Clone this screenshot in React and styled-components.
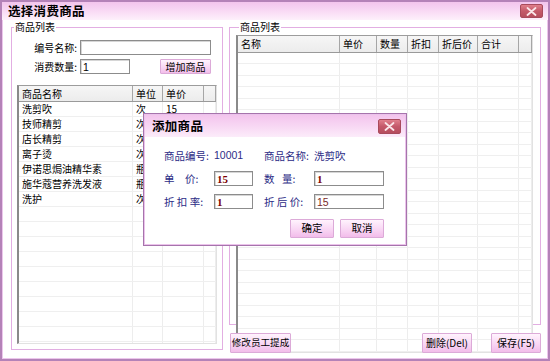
import React from "react";
import styled, { createGlobalStyle } from "styled-components";

const GlobalStyle = createGlobalStyle`
  html, body { margin: 0; padding: 0; background: #fff; }
  body {
    font-family: "Noto Sans CJK SC", "Noto Sans", sans-serif;
    font-size: 10px;
    color: #000;
  }
  * { box-sizing: border-box; }
`;

const Window = styled.div`
  position: relative;
  width: 550px;
  height: 361px;
  border: 2px solid #b482b8;
  box-shadow: inset 0 0 0 1px #ecc6ec;
  background: #fff;
  display: flex;
  flex-direction: column;
`;

const TitleBar = styled.div`
  height: 18px;
  flex: none;
  display: flex;
  align-items: center;
  justify-content: space-between;
  padding: 0 5px 0 6px;
  background: linear-gradient(#f3c4ed, #f9dcf5 55%, #fdf0fb);
`;

const Title = styled.div`
  font-size: 12.5px;
  font-weight: bold;
  line-height: 18px;
  letter-spacing: 0.3px;
`;

const CloseBtn = styled.div`
  width: ${(p) => p.w}px;
  height: ${(p) => p.h}px;
  border-radius: 2px;
  border: 1px solid #a84a5c;
  background: linear-gradient(#e07f8c, #c4596a 50%, #b64d5e);
  display: flex;
  align-items: center;
  justify-content: center;
`;

const CloseIcon = () => (
  <svg width="11" height="9" viewBox="0 0 11 9">
    <path d="M1.5 1 L9.5 8 M9.5 1 L1.5 8" stroke="#fbe6ea" strokeWidth="1.8" strokeLinecap="round" />
  </svg>
);

const Body = styled.div`
  flex: 1;
  display: flex;
  gap: 6px;
  padding: 1px 7px 0 9px;
  min-height: 0;
`;

const Group = styled.fieldset`
  margin: 0;
  padding: ${(p) => p.pad};
  width: ${(p) => p.w}px;
  height: ${(p) => p.h}px;
  flex: none;
  border: 1px solid #e2aee2;
  display: flex;
  flex-direction: column;
  min-width: 0;
`;

const Legend = styled.legend`
  margin-left: ${(p) => p.ml}px;
  padding: 0 1px;
  font-size: 10px;
  line-height: 12px;
`;

const Form = styled.div`
  display: grid;
  grid-template-columns: 63px 80px 51px;
  grid-auto-rows: 15px;
  row-gap: 4px;
  align-items: center;
  margin-top: 7px;
`;

const FormLabel = styled.div`
  text-align: right;
  padding-right: 3px;
  line-height: 15px;
`;

const TextInput = styled.input`
  grid-column: span ${(p) => p.span || 1};
  width: ${(p) => p.w}px;
  height: ${(p) => p.h || 15}px;
  margin: 0;
  padding: 0 2px;
  border: 1px solid #8c8c8c;
  box-shadow: inset 1px 1px 0 #d6d6d6;
  font-family: ${(p) => (p.serif ? '"Liberation Serif", serif' : '"Liberation Sans", "Noto Sans CJK SC", sans-serif')};
  font-size: ${(p) => (p.bold ? 11 : 10.5)}px;
  font-weight: ${(p) => (p.bold ? "bold" : "normal")};
  color: ${(p) => p.color || "#000"};
  background: #fff;
  outline: none;
`;

const PinkButton = styled.button`
  width: ${(p) => p.w}px;
  height: ${(p) => p.h}px;
  margin: 0;
  padding: 0;
  flex: none;
  border: 1px solid #dcaad8;
  border-radius: 1px;
  background: linear-gradient(#fff3fd, #f8d4f3 60%, #f2bdea);
  font-family: "Noto Sans CJK SC", "Noto Sans", sans-serif;
  font-size: ${(p) => p.fs || 10}px;
  line-height: 1;
  color: #000;
  white-space: nowrap;
`;

const Table = styled.div`
  margin-top: ${(p) => p.mt}px;
  flex: 1;
  min-height: 0;
  display: flex;
  flex-direction: column;
  overflow: hidden;
  border-left: 2px solid #8a8a8a;
  border-top: 1px solid #9c9c9c;
  border-right: 1px solid #e2e2e2;
  border-bottom: 1px solid #e2e2e2;
  background: #fff;
`;

const HeaderRow = styled.div`
  flex: none;
  display: flex;
  height: ${(p) => p.h}px;
  background: linear-gradient(#f6f6f6, #ececec);
  border-bottom: 1px solid #9a9a9a;
`;

const HeadCell = styled.div`
  flex: ${(p) => (p.w ? "none" : 1)};
  width: ${(p) => (p.w ? `${p.w}px` : "auto")};
  border-right: 1px solid #a6a6a6;
  padding-left: 3px;
  line-height: ${(p) => p.lh}px;
  white-space: nowrap;
  overflow: hidden;
`;

const Row = styled.div`
  flex: none;
  display: flex;
  height: ${(p) => p.h}px;
  border-bottom: 1px solid #efefef;
`;

const Cell = styled.div`
  flex: ${(p) => (p.w ? "none" : 1)};
  width: ${(p) => (p.w ? `${p.w}px` : "auto")};
  border-right: 1px solid #ededed;
  padding-left: 3px;
  line-height: ${(p) => p.h - 1}px;
  white-space: nowrap;
  overflow: hidden;
`;

const RightColumn = styled.div`
  display: flex;
  flex-direction: column;
  gap: 8px;
  width: 312px;
`;

const ButtonBar = styled.div`
  display: flex;
  align-items: center;
  height: 20px;
  padding-left: 1px;
`;

const Spacer = styled.div`
  flex: 1;
`;

const Gap = styled.div`
  width: ${(p) => p.w}px;
  flex: none;
`;

/* dialog */
const Dialog = styled.div`
  position: absolute;
  left: 141px;
  top: 111px;
  width: 264px;
  height: 133px;
  border: 1px solid #a674ac;
  box-shadow: inset 0 0 0 1px #ebc3eb;
  background: #fff;
  display: flex;
  flex-direction: column;
`;

const DialogTitle = styled.div`
  height: 22px;
  flex: none;
  margin: 1px 1px 0 1px;
  display: flex;
  align-items: center;
  justify-content: space-between;
  padding: 0 4px 0 7px;
  background: linear-gradient(#f3c4ed, #f8d9f4 55%, #fcecfa);
`;

const DialogBody = styled.div`
  padding: 11px 0 0 20px;
  display: flex;
  flex-direction: column;
`;

const DialogGrid = styled.div`
  display: grid;
  grid-template-columns: 50px 50px 50px 70px;
  grid-auto-rows: 15px;
  row-gap: 8px;
  align-items: center;
`;

const DLabel = styled.div`
  color: #2c2c86;
  font-size: 10.5px;
  line-height: 15px;
  white-space: pre;
`;

const DValue = styled.div`
  color: #2c2c86;
  font-size: 10.5px;
  line-height: 15px;
  font-family: ${(p) => (p.latin ? '"Liberation Sans", sans-serif' : "inherit")};
`;

const DialogActions = styled.div`
  display: flex;
  justify-content: flex-end;
  gap: 6px;
  margin-top: 10px;
  padding-right: 22px;
`;

const leftCols = [114, 30, 41, 0];
const leftRows = [
  ["洗剪吹", "次", "15"],
  ["技师精剪", "次", ""],
  ["店长精剪", "次", ""],
  ["离子烫", "次", ""],
  ["伊诺思焗油精华素", "瓶", ""],
  ["施华蔻营养洗发液", "瓶", ""],
  ["洗护", "次", ""],
];
const rightCols = [102, 37, 31, 31, 39, 41, 0];
const rightHead = ["名称", "单价", "数量", "折扣", "折后价", "合计", ""];

export default function App() {
  const leftAll = [...leftRows, ...Array.from({ length: 10 }, () => ["", "", ""])];
  const rightAll = Array.from({ length: 26 }, (_, i) => i);
  return (
    <>
      <GlobalStyle />
      <Window>
        <TitleBar>
          <Title>选择消费商品</Title>
          <CloseBtn w={23} h={14}>
            <CloseIcon />
          </CloseBtn>
        </TitleBar>
        <Body>
          <Group w={212} h={329} pad="0 5px 5px 5px">
            <Legend ml={-3}>商品列表</Legend>
            <Form>
              <FormLabel>编号名称:</FormLabel>
              <TextInput span={2} w={131} readOnly value="" />
              <FormLabel>消费数量:</FormLabel>
              <TextInput w={50} readOnly value="1" />
              <PinkButton w={51} h={15}>增加商品</PinkButton>
            </Form>
            <Table mt={11}>
              <HeaderRow h={16}>
                {["商品名称", "单位", "单价", ""].map((t, i) => (
                  <HeadCell key={i} w={leftCols[i]} lh={15}>{t}</HeadCell>
                ))}
              </HeaderRow>
              {leftAll.map((r, i) => (
                <Row key={i} h={15}>
                  {[...r, ""].map((t, j) => (
                    <Cell key={j} w={leftCols[j]} h={15}>{t}</Cell>
                  ))}
                </Row>
              ))}
            </Table>
          </Group>
          <RightColumn>
            <Group w={312} h={304} pad="0 7px 5px 6px">
              <Legend ml={3}>商品列表</Legend>
              <Table mt={2}>
                <HeaderRow h={17}>
                  {rightHead.map((t, i) => (
                    <HeadCell key={i} w={rightCols[i]} lh={16}>{t}</HeadCell>
                  ))}
                </HeaderRow>
                {rightAll.map((i) => (
                  <Row key={i} h={i % 2 ? 12 : 11}>
                    {rightCols.map((w, j) => (
                      <Cell key={j} w={w} h={i % 2 ? 12 : 11} />
                    ))}
                  </Row>
                ))}
              </Table>
            </Group>
            <ButtonBar>
              <PinkButton w={61} h={20} fs={9.6}>修改员工提成</PinkButton>
              <Spacer />
              <PinkButton w={50} h={20}>删除(Del)</PinkButton>
              <Gap w={19} />
              <PinkButton w={50} h={20}>保存(F5)</PinkButton>
            </ButtonBar>
          </RightColumn>
        </Body>

        <Dialog>
          <DialogTitle>
            <Title>添加商品</Title>
            <CloseBtn w={23} h={15}>
              <CloseIcon />
            </CloseBtn>
          </DialogTitle>
          <DialogBody>
            <DialogGrid>
              <DLabel>商品编号:</DLabel>
              <DValue latin>10001</DValue>
              <DLabel>商品名称:</DLabel>
              <DValue>洗剪吹</DValue>

              <DLabel>{"单\u3000价:"}</DLabel>
              <TextInput serif w={39} bold color="#7a0000" readOnly value="15" />
              <DLabel>{"数\u2002 量:"}</DLabel>
              <TextInput serif w={70} bold color="#7a0000" readOnly value="1" />

              <DLabel>{"折 扣 率:"}</DLabel>
              <TextInput serif w={39} bold color="#7a0000" readOnly value="1" />
              <DLabel>{"折 后 价:"}</DLabel>
              <TextInput w={70} color="#7a2a2a" readOnly value="15" />
            </DialogGrid>
            <DialogActions>
              <PinkButton w={44} h={19} fs={10.5}>确定</PinkButton>
              <PinkButton w={44} h={19} fs={10.5}>取消</PinkButton>
            </DialogActions>
          </DialogBody>
        </Dialog>
      </Window>
    </>
  );
}
